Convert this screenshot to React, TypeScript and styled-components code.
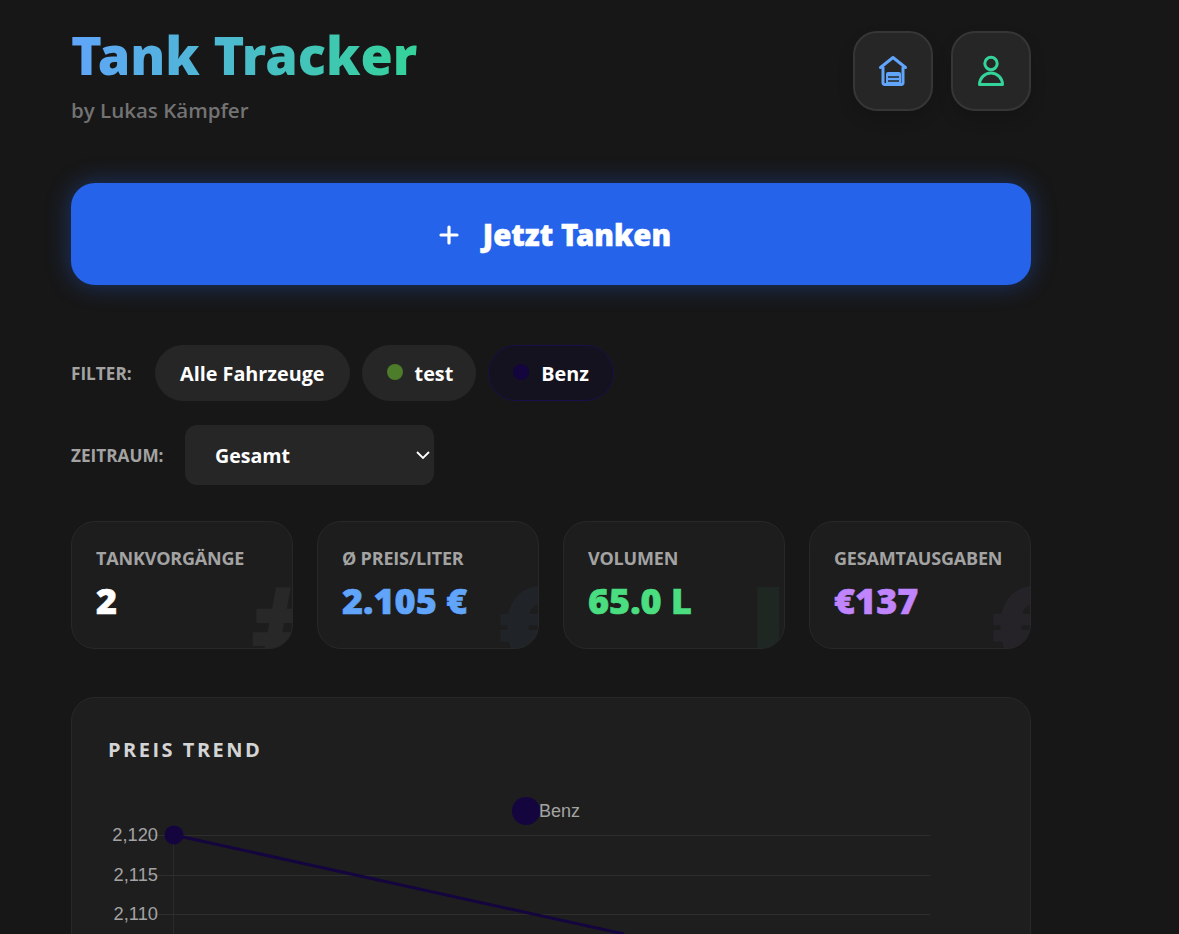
import React from "react";
import styled, { createGlobalStyle } from "styled-components";

const Global = createGlobalStyle`
  html, body { margin: 0; padding: 0; background: #171717; }
  body { font-family: "Open Sans", "Noto Sans", sans-serif; color: #fff; }
  #root { height: 934px; overflow: hidden; }
`;

const Page = styled.main`
  width: 960px;
  margin-left: 71px;
  padding-top: 30px;
`;

const Header = styled.header`
  display: flex;
  justify-content: space-between;
  align-items: flex-start;
  height: 153px;
`;

const TitleBlock = styled.div`
  display: flex;
  flex-direction: column;
`;

const Title = styled.h1`
  margin: 0;
  font-family: "Noto Sans", "Open Sans", sans-serif;
  font-size: 52.3px;
  line-height: 50px;
  font-weight: 900;
  width: fit-content;
  background: linear-gradient(90deg, #60a5fa, #34d399);
  -webkit-background-clip: text;
  background-clip: text;
  color: transparent;
`;

const Subtitle = styled.p`
  margin: 16px 0 0;
  font-size: 20.5px;
  line-height: 28px;
  font-weight: 600;
  color: #737373;
`;

const IconRow = styled.div`
  display: flex;
  gap: 18px;
  padding-top: 1px;
`;

const IconButton = styled.button<{ $color: string }>`
  width: 80px;
  height: 80px;
  padding: 0;
  display: flex;
  align-items: center;
  justify-content: center;
  background: #262626;
  border: 2px solid #363636;
  border-radius: 24px;
  color: ${(p) => p.$color};
  box-shadow: 0 8px 16px rgba(0, 0, 0, 0.15);
`;

const Cta = styled.button`
  width: 100%;
  height: 102px;
  padding: 2px 0 0 6px;
  display: flex;
  align-items: center;
  justify-content: center;
  gap: 22px;
  border: 0;
  border-radius: 24px;
  background: #2563eb;
  color: #fff;
  font-family: "Noto Sans", "Open Sans", sans-serif;
  font-size: 29.4px;
  font-weight: 900;
  -webkit-text-stroke: 0.5px #fff;
  box-shadow: 0 0 24px rgba(37, 99, 235, 0.4);
  margin-bottom: 60px;
`;

const FilterRow = styled.div`
  display: flex;
  align-items: center;
  margin-bottom: 24px;
`;

const FieldLabel = styled.span<{ $width: number }>`
  width: ${(p) => p.$width}px;
  flex: none;
  font-size: 17.2px;
  font-weight: 700;
  color: #a3a3a3;
`;

const Pills = styled.div`
  display: flex;
  gap: 12px;
`;

const Pill = styled.button<{ $tint?: string; $paddingRight?: number }>`
  height: 56px;
  padding: 1px ${(p) => p.$paddingRight ?? 24}px 0 24px;
  display: flex;
  align-items: center;
  gap: 12px;
  border-radius: 28px;
  border: 1px solid ${(p) => p.$tint ?? "#262626"};
  background: ${(p) => (p.$tint ? "#14121f" : "#262626")};
  color: #fff;
  font-family: inherit;
  font-size: 19.8px;
  font-weight: 700;
`;

const Dot = styled.span<{ $color: string }>`
  width: 16px;
  height: 16px;
  margin-top: -4px;
  border-radius: 50%;
  background: ${(p) => p.$color};
`;

const SelectBox = styled.div`
  position: relative;
  width: 249px;
  height: 60px;
  display: flex;
  align-items: center;
  padding: 1px 0 0 30px;
  box-sizing: border-box;
  background: #262626;
  border-radius: 12px;
  font-size: 19.6px;
  font-weight: 700;
`;

const Chevron = styled.svg`
  position: absolute;
  right: 3px;
  top: 22px;
`;

const Stats = styled.section`
  display: grid;
  grid-template-columns: repeat(4, 222px);
  gap: 24px;
  margin-top: 36px;
  margin-bottom: 48px;
`;

const StatCard = styled.article`
  position: relative;
  height: 128px;
  box-sizing: border-box;
  padding: 23px 24px;
  background: #1d1d1d;
  border: 1px solid #282828;
  border-radius: 24px;
  overflow: hidden;
`;

const StatLabel = styled.div`
  font-size: 18px;
  line-height: 26px;
  font-weight: 700;
  letter-spacing: -0.2px;
  color: #a3a3a3;
  white-space: nowrap;
`;

const StatValue = styled.div<{ $color: string }>`
  margin-top: 5px;
  font-family: "Noto Sans", "Open Sans", sans-serif;
  font-size: 36px;
  line-height: 50px;
  font-weight: 900;
  color: ${(p) => p.$color};
  -webkit-text-stroke: 0.6px ${(p) => p.$color};
`;

const Watermark = styled.span<{ $color: string; $right: number }>`
  position: absolute;
  right: ${(p) => p.$right}px;
  bottom: -46px;
  font-size: 112px;
  line-height: 140px;
  font-weight: 800;
  color: ${(p) => p.$color};
  opacity: 0.05;
  pointer-events: none;
`;

const ChartCard = styled.section`
  height: 400px;
  box-sizing: border-box;
  padding: 39px 36px;
  background: #1e1e1e;
  border: 1px solid #282828;
  border-radius: 24px;
`;

const ChartTitle = styled.h2`
  margin: 0 0 32px;
  font-size: 20px;
  line-height: 26px;
  font-weight: 700;
  letter-spacing: 2.5px;
  color: #d4d4d4;
`;

const Chart = styled.svg`
  display: block;
  margin-left: -36px;
  overflow: visible;
`;

const stats = [
  { label: "TANKVORGÄNGE", value: "2", color: "#ffffff", mark: "#", right: -33 },
  { label: "Ø PREIS/LITER", value: "2.105 €", color: "#60a5fa", mark: "€", right: -25 },
  { label: "VOLUMEN", value: "65.0 L", color: "#4ade80", mark: "L", right: -30 },
  { label: "GESAMTAUSGABEN", value: "€137", color: "#c084fc", mark: "€", right: -26 },
];

const ticks = [
  { y: 40, label: "2,120" },
  { y: 80, label: "2,115" },
  { y: 119, label: "2,110" },
];

export default function App() {
  return (
    <>
      <Global />
      <Page>
        <Header>
          <TitleBlock>
            <Title>Tank Tracker</Title>
            <Subtitle>by Lukas Kämpfer</Subtitle>
          </TitleBlock>
          <IconRow>
            <IconButton $color="#60a5fa" aria-label="Garage">
              <svg width="32" height="32" viewBox="0 0 32 32" fill="none">
                <path d="M3.5 12.5 16 2.5 28.5 12.5" stroke="currentColor" strokeWidth="3" strokeLinecap="round" strokeLinejoin="round" />
                <path d="M6 12v16a1.5 1.5 0 0 0 1.5 1.5h17a1.5 1.5 0 0 0 1.5-1.5V12" stroke="currentColor" strokeWidth="3" />
                <path d="M9 30V19a2 2 0 0 1 2-2h11a2 2 0 0 1 2 2v11z" fill="currentColor" />
                <path d="M11 22h11M11 26h11" stroke="#262626" strokeWidth="1.4" />
              </svg>
            </IconButton>
            <IconButton $color="#34d399" aria-label="Profil">
              <svg width="32" height="32" viewBox="0 0 32 32" fill="none" stroke="currentColor" strokeWidth="3">
                <circle cx="16" cy="8.5" r="6.2" />
                <path d="M4.5 29.5a11.5 11.5 0 0 1 23 0z" strokeLinejoin="round" />
              </svg>
            </IconButton>
          </IconRow>
        </Header>

        <Cta>
          <svg width="24" height="24" viewBox="0 0 24 24" stroke="#fff" strokeWidth="3.2" strokeLinecap="round">
            <path d="M12 4v16M4 12h16" />
          </svg>
          Jetzt Tanken
        </Cta>

        <FilterRow>
          <FieldLabel $width={84}>FILTER:</FieldLabel>
          <Pills>
            <Pill>Alle Fahrzeuge</Pill>
            <Pill $paddingRight={22}><Dot $color="#4d7c2a" />test</Pill>
            <Pill $tint="#1a0f4a"><Dot $color="#14053f" />Benz</Pill>
          </Pills>
        </FilterRow>
        <FilterRow>
          <FieldLabel $width={114}>ZEITRAUM:</FieldLabel>
          <SelectBox>
            Gesamt
            <Chevron width="16" height="16" viewBox="0 0 16 16" fill="none" stroke="#fff" strokeWidth="1.8">
              <path d="M2 5 8 11 14 5" />
            </Chevron>
          </SelectBox>
        </FilterRow>

        <Stats>
          {stats.map((s) => (
            <StatCard key={s.label}>
              <StatLabel>{s.label}</StatLabel>
              <StatValue $color={s.color}>{s.value}</StatValue>
              <Watermark $color={s.color} $right={s.right} aria-hidden>{s.mark}</Watermark>
            </StatCard>
          ))}
        </Stats>

        <ChartCard>
          <ChartTitle>PREIS TREND</ChartTitle>
          <Chart width="958" height="141" viewBox="0 0 958 141" fontFamily="Liberation Sans, Arial, sans-serif">
            <circle cx="454" cy="16" r="14" fill="#14053f" />
            <text x="467" y="22" fontSize="18" fill="#a3a3a3">Benz</text>
            {ticks.map((t) => (
              <g key={t.label}>
                <path d={`M76 ${t.y + 0.5}H858`} stroke="#2e2e2e" />
                <text x="86" y={t.y + 6} fontSize="18.3" fill="#a3a3a3" textAnchor="end">{t.label}</text>
              </g>
            ))}
            <path d="M101.5 40V141" stroke="#2a2a2a" />
            <path d="M102 40 L552 139" stroke="#14053f" strokeWidth="3" />
            <circle cx="102" cy="40" r="9.5" fill="#14053f" />
          </Chart>
        </ChartCard>
      </Page>
    </>
  );
}
